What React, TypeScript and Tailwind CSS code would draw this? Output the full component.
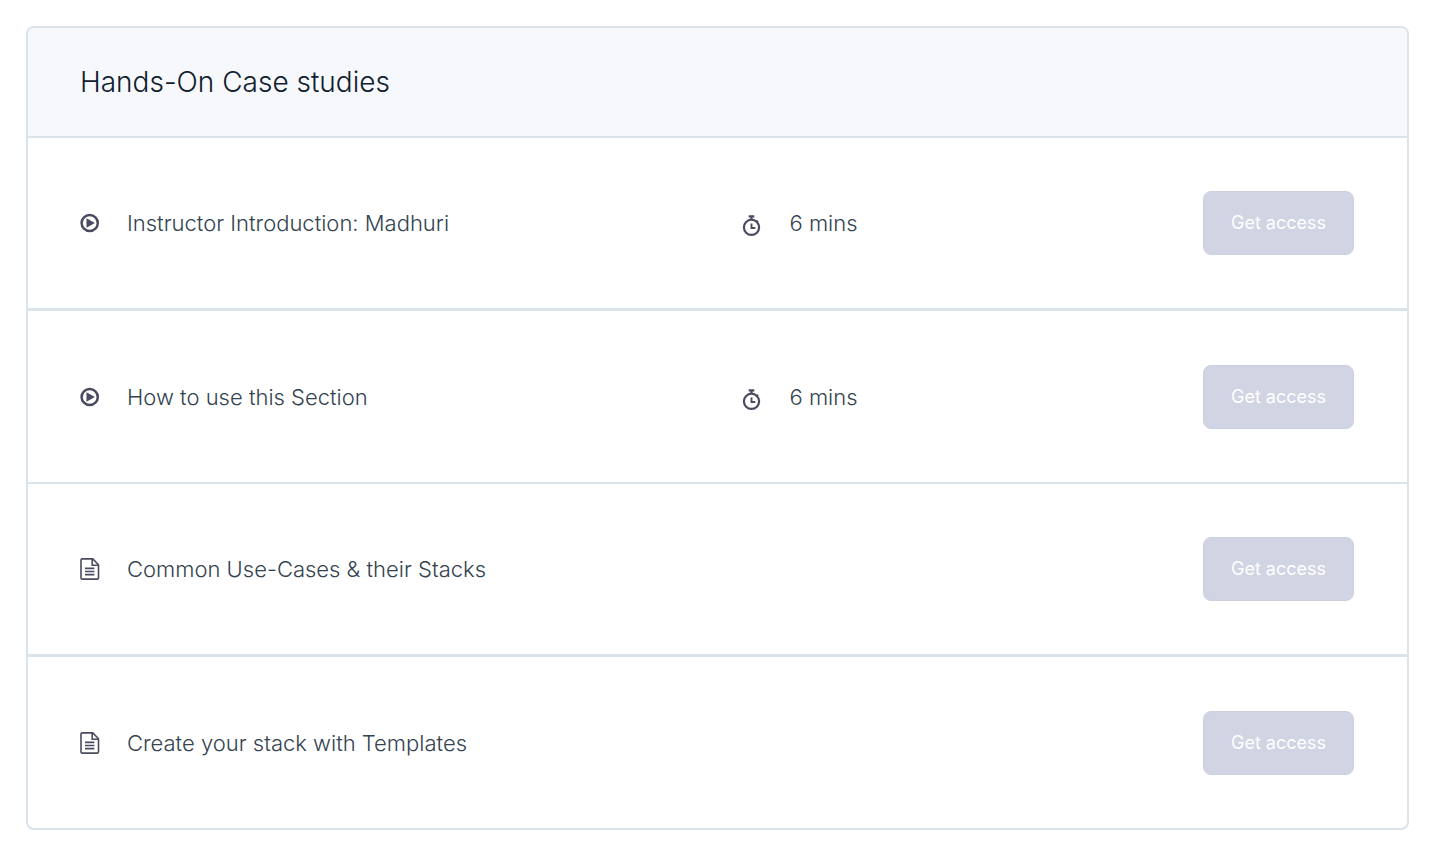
import React from 'react';

type Lesson = {
  title: string;
  kind: 'video' | 'article';
  duration?: string;
};

const lessons: Lesson[] = [
  { title: 'Instructor Introduction: Madhuri', kind: 'video', duration: '6 mins' },
  { title: 'How to use this Section', kind: 'video', duration: '6 mins' },
  { title: 'Common Use-Cases & their Stacks', kind: 'article' },
  { title: 'Create your stack with Templates', kind: 'article' },
];

const PlayIcon = () => (
  <svg viewBox="0 0 20 20" className="w-5 h-5" fill="none" aria-hidden="true">
    <circle cx="9.7" cy="10" r="8.1" stroke="currentColor" strokeWidth="2.5" />
    <path d="M6.5 5.2v9.6l8.4-4.8z" fill="currentColor" />
  </svg>
);

const ArticleIcon = () => (
  <svg viewBox="0 0 20 22" className="w-5 h-[22px]" fill="none" stroke="currentColor" strokeWidth="1.6" aria-hidden="true">
    <path d="M2 .9h10.8l5.7 5.8v13.4a1 1 0 0 1-1 1H2a1 1 0 0 1-1-1V1.9a1 1 0 0 1 1-1z" strokeLinejoin="round" />
    <path d="M12.2 1v6.3h6.3" />
    <path d="M5 10.4h9.4M5 13.5h9.4M5 16.6h9.4" />
  </svg>
);

const TimerIcon = () => (
  <svg viewBox="0 0 20 22" className="w-5 h-[22px]" fill="none" stroke="currentColor" strokeWidth="2.2" aria-hidden="true">
    <circle cx="9.5" cy="13.3" r="7.6" />
    <path d="M6.7 2.4h5.6M9.5 2.4v3.4M14.7 7.9l1.2-1.2" />
    <path d="M9.5 9.4v4.6h3.8" strokeWidth="1.9" />
  </svg>
);

const LessonRow = ({ lesson }: { lesson: Lesson }) => (
  <li className="flex items-center h-[173px] pl-[52px] pr-[53px] border-b-2 border-[#dbe3eb] odd:border-b-3 last:h-[171px] last:border-b-0">
    <div className="flex items-center gap-[27px] w-[52%]">
      <span className="shrink-0 text-[#4a4b60]">
        {lesson.kind === 'video' ? <PlayIcon /> : <ArticleIcon />}
      </span>
      <span>{lesson.title}</span>
    </div>
    {lesson.duration && (
      <div className="flex items-center gap-[27px]">
        <span className="shrink-0 pt-1 text-[#4a4b60]">
          <TimerIcon />
        </span>
        <span>{lesson.duration}</span>
      </div>
    )}
    <button
      type="button"
      className="ml-auto shrink-0 h-16 px-[27px] rounded-lg border border-[#cdd0e2] bg-[#d1d4e3] text-lg font-normal text-white"
    >
      Get access
    </button>
  </li>
);

const App = () => {
  return (
    <main className="min-h-screen bg-white pt-[26px] pb-7 pl-[26px] pr-[47px] font-['Inter',sans-serif]">
      <section className="rounded-lg border-2 border-[#dbe3eb] overflow-hidden">
        <header className="flex items-center h-[110px] px-[52px] bg-[#f6f8fc] border-b-2 border-[#dbe3eb]">
          <h1 className="text-[28px] leading-9 font-light text-[#10202d]">Hands-On Case studies</h1>
        </header>
        <ul className="text-[22px] leading-8 font-light text-[#33434f]">
          {lessons.map((lesson) => (
            <LessonRow key={lesson.title} lesson={lesson} />
          ))}
        </ul>
      </section>
    </main>
  );
};

export default App;
